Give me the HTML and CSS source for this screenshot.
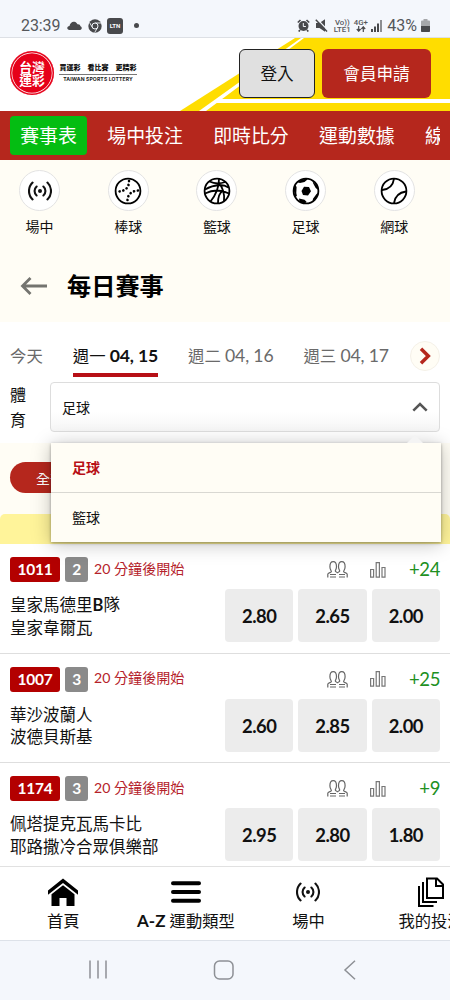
FILE: index.html
```
<!DOCTYPE html>
<html lang="zh-Hant">
<head>
<meta charset="utf-8">
<title>每日賽事</title>
<link rel="stylesheet" href="styles.css">
</head>
<body>
<svg class="defs" width="0" height="0">
  <symbol id="live" viewBox="0 0 24 20"><circle cx="12" cy="10" r="2" fill="currentColor"/><g fill="none" stroke="currentColor" stroke-width="2.100" stroke-linecap="round"><path d="M8.600 5.500a6 6 0 0 0 0 9M15.400 5.500a6 6 0 0 1 0 9M4.600 1.600a11.600 11.600 0 0 0 0 16.800M19.400 1.600a11.600 11.600 0 0 1 0 16.800"/></g></symbol>
  <symbol id="people" viewBox="0 0 21 17"><g fill="none" stroke="#666" stroke-width="1.200"><path d="M.8 16.500v-3.200c0-1.500 3.400-1.700 3.600-2.600.2-.9-1.500-2-1.500-5C2.900 2.500 4 .7 6.200.7s3.300 1.800 3.300 5c0 2.400-1.200 3.700-1.200 4.400 0 .9 2 1 2.200 2 .2-1 2.200-1.100 2.200-2 0-.7-1.200-2-1.200-4.400 0-3.200 1.100-5 3.300-5s3.300 1.800 3.300 5c0 3-1.700 4.100-1.500 5 .2.900 3.600 1.100 3.600 2.600v3.200"/><path d="M3 13.500h6M3 16h6M12 13.500h6M12 16h6"/></g></symbol>
  <symbol id="bars" viewBox="0 0 16 16"><g fill="none" stroke="#777" stroke-width="1.200"><path d="M.6 7.500h3v7.700h-3zM6.200.6h3.200v14.600H6.200zM12 5.500h3v9.700h-3z"/></g></symbol>
</svg>
<div class="statusbar">
  <div class="status-left">
    <span class="clock">23:39</span>
    <svg class="cloud" width="15" height="9" viewBox="0 0 15 9"><path d="M2.500 9C-.5 9-.4 5 2.500 5 3 2 5.200.3 7.300.7c1.600.2 2.700 1.300 3.200 2.500 2-.2 2.700.8 2.900 2C15.500 6 15 9 13 9z" fill="#48494c"/></svg>
    <svg class="chrome" width="14" height="14" viewBox="0 0 14 14"><circle cx="7" cy="7" r="6.700" fill="#48494c"/><path d="M7 4h6M4.400 8.500 1.500 3.500M9.600 8.500 6.700 13.500" stroke="#f4f7fc" stroke-width=".9"/><circle cx="7" cy="7" r="3" fill="#48494c" stroke="#f4f7fc"/></svg>
    <span class="ltn">LTN</span>
    <span class="dot"></span>
  </div>
  <div class="status-right">
    <svg width="13" height="13" viewBox="0 0 13 13"><circle cx="6.500" cy="7" r="5" fill="#48494c"/><path d="M.8 3.500 3.500 1M12.200 3.500 9.500 1M3 11l-1.300 1.500M10 11l1.300 1.500" stroke="#48494c" stroke-width="1.700"/><path d="M6.300 4v3.500h2.600" stroke="#f4f7fc" fill="none"/></svg>
    <svg width="13" height="13" viewBox="0 0 13 13"><path d="M1 4h3.500L10 .3v12.400L4.500 9H1z" fill="#48494c"/><path d="M2 0l11 11.500" stroke="#f4f7fc" stroke-width="1.300"/><path d="M.8.8l11.200 11.700" stroke="#48494c" stroke-width="1.500"/></svg>
    <span class="net">Vo))<br>LTE1</span>
    <span class="net">4G+<br><svg width="10" height="6" viewBox="0 0 10 6"><path d="M2.700 0v5M.8 3l1.900 2.200L4.600 3M7.300 6V1M5.400 3l1.900-2.200L9.200 3" fill="none" stroke="#48494c" stroke-width="1.200"/></svg></span>
    <svg width="11" height="12" viewBox="0 0 11 12"><path d="M0 9h2v3H0zM3 6.500h2V12H3zM6 3.500h2V12H6z" fill="#48494c"/><path d="M9 0h2v12H9z" fill="#8c8e92"/></svg>
    <span class="pct">43%</span>
    <svg class="batt" width="9" height="13" viewBox="0 0 9 13"><path d="M2.500 0h4v1.500H8Q9 1.500 9 2.500V12q0 1-1 1H1q-1 0-1-1V2.500q0-1 1-1h1.500z" fill="#a5a7aa"/><path d="M0 7h9v5q0 1-1 1H1q-1 0-1-1z" fill="#48494c"/></svg>
  </div>
</div>
<header class="header">
  <svg class="ribbon" width="270" height="73" viewBox="0 0 270 73"><path d="M115 0H270V73H0z" fill="#ffdd00"/><path d="M121 0h3L26 73h-7z" fill="#fff"/><path d="M38 61H270v4H33z" fill="#fff"/></svg>
  <div class="logo">
    <div class="seal"><span>台灣</span><span>運彩</span></div>
    <div class="slogan"><b>買運彩　看比賽　更精彩</b><small>TAIWAN SPORTS LOTTERY</small></div>
  </div>
  <div class="actions"><button class="btn login">登入</button><button class="btn join">會員申請</button></div>
</header>
<nav class="mainnav"><div class="track"><a class="active">賽事表</a><a>場中投注</a><a>即時比分</a><a>運動數據</a><a>線</a></div></nav>
<section class="sports">
  <div class="sport"><i><svg width="24" height="20"><use href="#live"/></svg></i><span>場中</span></div>
  <div class="sport"><i><svg width="28" height="28" viewBox="0 0 28 28"><circle cx="14" cy="14" r="12.400" class="ln"/><path d="M15 4q0 9.500-10 10.500M24 13.500Q13.500 14.500 13.500 24" fill="none" stroke="#000" stroke-width="2.600" stroke-linecap="round" stroke-dasharray=".1 3.800"/></svg></i><span>棒球</span></div>
  <div class="sport"><i><svg width="28" height="28" viewBox="0 0 28 28"><circle cx="14" cy="14" r="12.400" class="ln"/><path class="ln" d="M6.500 4.500Q14 8 22.500 5M16 2Q16 14 7.500 24.500M16 6.500Q22 13 21 24M2 12.500Q9 8.500 16.500 8 22 8 25.500 10.500M2 16.500Q14 10.500 26 16.500M15 26Q15 17 19.500 14"/></svg></i><span>籃球</span></div>
  <div class="sport"><i><svg width="28" height="28" viewBox="0 0 28 28"><circle cx="14" cy="14" r="12.400" class="ln"/><path d="M9.500 14 12 9.700l5 .3 2 4.200-3 4.200-5-.4zM8.500 3.300 14 1.500l1.500 1-3 2.500-4.500 1-2.500-.7zM20.500 4l5 5 .7 4-2.500-2-2.500-4.500zM1.600 12l1.800-4 1.200 2-.3 6 .6 3-1.700 1zM7 21.500l5.500 1.200 2 2L13 26.400 7.500 25zM24.500 17l1.500-1-1.500 5-4 3.700.5-3z"/></svg></i><span>足球</span></div>
  <div class="sport"><i><svg width="28" height="28" viewBox="0 0 28 28"><circle cx="14" cy="14" r="12.400" class="ln"/><path class="ln" d="M2 13Q12.500 12 14 1.800M26 14.500Q15.500 16 14 26"/></svg></i><span>網球</span></div>
</section>
<section class="title"><svg width="28" height="20" viewBox="0 0 28 20"><path d="M27 10H3M10.500 2 2.500 10l8 8" fill="none" stroke="#74746f" stroke-width="2.800"/></svg><h1>每日賽事</h1></section>
<section class="days"><a>今天</a><a class="active">週一 <b>04, 15</b></a><a>週二 <em>04, 16</em></a><a>週三 <em>04, 17</em></a><span class="next"><svg width="12" height="18" viewBox="0 0 12 18"><path d="M2 1.800 9.300 9 2 16.200" fill="none" stroke="#b5271d" stroke-width="3.500"/></svg></span></section>
<section class="filter">
  <label>體<br>育</label>
  <div class="select"><span>足球</span><svg width="16" height="10" viewBox="0 0 16 10"><path d="M1.300 8.700 8 2l6.700 6.700" fill="none" stroke="#555" stroke-width="2.500"/></svg>
    <div class="menu"><div class="on">足球</div><div>籃球</div></div>
  </div>
</section>
<section class="chips"><span class="chip">全部</span></section>
<div class="league"></div>
<main class="matches">
  <article class="match">
    <div class="meta"><b class="code">1011</b><b class="min">2</b><span class="when">20 分鐘後開始</span><svg class="people" width="21" height="17"><use href="#people"/></svg><svg class="bars" width="16" height="16"><use href="#bars"/></svg><span class="more">+24</span></div>
    <div class="body"><div class="teams">皇家馬德里<b>B</b>隊<br>皇家韋爾瓦</div><b class="odd">2.80</b><b class="odd">2.65</b><b class="odd">2.00</b></div>
  </article>
  <article class="match">
    <div class="meta"><b class="code">1007</b><b class="min">3</b><span class="when">20 分鐘後開始</span><svg class="people" width="21" height="17"><use href="#people"/></svg><svg class="bars" width="16" height="16"><use href="#bars"/></svg><span class="more">+25</span></div>
    <div class="body"><div class="teams">華沙波蘭人<br>波德貝斯基</div><b class="odd">2.60</b><b class="odd">2.85</b><b class="odd">2.00</b></div>
  </article>
  <article class="match">
    <div class="meta"><b class="code">1174</b><b class="min">3</b><span class="when">20 分鐘後開始</span><svg class="people" width="21" height="17"><use href="#people"/></svg><svg class="bars" width="16" height="16"><use href="#bars"/></svg><span class="more">+9</span></div>
    <div class="body"><div class="teams">佩塔提克瓦馬卡比<br>耶路撒冷合眾俱樂部</div><b class="odd">2.95</b><b class="odd">2.80</b><b class="odd">1.80</b></div>
  </article>
</main>
<footer class="tabbar">
  <a><i><svg width="32" height="28" viewBox="0 0 32 28"><path d="M1 12.500 16 .5l15 12v4.300L16 5 1 16.800z"/><path d="M4.500 16.300 16 7.300l11.500 9V28H19.500v-8h-7v8h-8z"/></svg></i>首頁</a>
  <a><i><svg width="30" height="22" viewBox="0 0 30 22"><path d="M2 2.200h26M2 11h26M2 19.800h26" stroke="#000" stroke-width="4" stroke-linecap="round"/></svg></i><span><b>A-Z</b> 運動類型</span></a>
  <a><i><svg width="24" height="20"><use href="#live"/></svg></i>場中</a>
  <a><i><svg width="28" height="30" viewBox="0 0 28 30"><g fill="none" stroke="#000" stroke-width="2"><path d="M10 1.500h10l6 6V21H10zM19 1.500V9h7M6 5v20h14M2 9v20h14.500"/></g></svg></i>我的投注</a>
</footer>
<div class="sysnav">
  <svg width="20" height="19" viewBox="0 0 20 19"><path d="M2 .5v18M10 .5v18M18 .5v18" stroke="#8d9095" stroke-width="1.500"/></svg>
  <svg width="22" height="20" viewBox="0 0 22 20"><rect x="1.500" y="1" width="18.500" height="18" rx="5" fill="none" stroke="#8d9095" stroke-width="1.500"/></svg>
  <svg width="14" height="20" viewBox="0 0 14 20"><path d="M12 .8 2 10l10 9.200" fill="none" stroke="#8d9095" stroke-width="1.500"/></svg>
</div>
</body>
</html>
```
FILE: styles.css
```
* { box-sizing: border-box; }
html { overflow: hidden; }
body { margin: 0; width: 450px; height: 1000px; overflow: hidden; background: #fff; color: #111; font-family: Lato, "Noto Sans CJK TC", sans-serif; font-size: 16px; display: flex; flex-direction: column; }
body > * { flex: none; }
svg { display: block; flex: none; }
i, em { font-style: normal; }
a, span, b { white-space: nowrap; }
.defs { display: none; }
.ln { fill: none; stroke: #000; stroke-width: 1.8; }

.statusbar { height: 38px; background: #f4f7fc; border-bottom: 1px solid #dde0e5; display: flex; justify-content: space-between; align-items: flex-start; padding: 15px 20px 0 21px; color: #55575b; font-family: Roboto, sans-serif; }
.status-left, .status-right { display: flex; align-items: center; height: 21px; }
.clock { font-size: 16px; width: 46px; letter-spacing: -.1px; }
.chrome { margin-left: 6px; }
.ltn { margin-left: 5px; width: 16px; height: 16px; border-radius: 3px; background: #48494c; color: #fff; font: bold 6px/16px Roboto, sans-serif; text-align: center; }
.dot { margin-left: 11px; width: 5px; height: 5px; border-radius: 50%; background: #48494c; }
.status-right svg { margin-right: 5.500px; }
.net { font: 500 7.800px/7px Roboto, sans-serif; text-align: center; margin-right: 3px; }
.net svg { display: inline-block; margin: 0; }
.pct { font-size: 16px; margin-right: 4px; }
.status-right .batt { margin-right: 0; }

.header { height: 73px; position: relative; display: flex; justify-content: space-between; padding: 11px 19px 0 10px; }
.ribbon { position: absolute; right: 0; top: 0; }
.logo, .actions { position: relative; display: flex; }
.logo { padding-top: 2px; gap: 5px; }
.seal { width: 44px; height: 44px; border-radius: 50%; background: #e60019; box-shadow: inset 0 0 0 1.500px #e60019, inset 0 0 0 2.200px #fff; color: #fff; font: 700 12.800px/13px "Noto Sans CJK TC", sans-serif; text-align: center; display: flex; flex-direction: column; justify-content: center; }
.slogan { width: 78px; padding-top: 10px; display: flex; flex-direction: column; }
.slogan b { font-size: 7px; line-height: 13px; border-bottom: 1px solid #777; font-weight: 900; text-align: center; height: 14px; }
.slogan small { font: bold 5.100px/9px Inter, sans-serif; text-align: center; white-space: nowrap; letter-spacing: .12px; color: #222; }
.actions { gap: 7px; }
.btn { height: 49px; border-radius: 6px; padding: 0 0 1px; font: 16.600px Lato, "Noto Sans CJK TC", sans-serif; }
.login { width: 76px; background: #e0e0e0; border: 1px solid #222; color: #111; }
.join { width: 109px; background: #b5271d; border: 0; color: #fff; }

.mainnav { height: 49px; background: #b5271d; padding: 5px 10px 0; }
.track { display: flex; gap: 10px; overflow: hidden; height: 39px; }
.track a { flex: none; color: #fff; font-size: 18.900px; line-height: 39px; padding: 0 10.200px; border-radius: 4px; }
.track .active { background: #04bd12; }

.sports { height: 90px; background: #fffdf5; display: flex; padding: 10px 0 0 19px; gap: 47.700px; }
.sport { width: 41px; display: flex; flex-direction: column; align-items: center; font-size: 14px; }
.sport i { width: 41px; height: 41px; flex: none; border: 1px solid #e3e3e3; border-radius: 50%; background: #fff; display: flex; align-items: center; justify-content: center; }
.sport span { line-height: 20px; margin-top: 6px; }
.title { height: 72px; background: #fffdf5; display: flex; align-items: center; padding-left: 20px; gap: 19px; }
.title h1 { margin: 0; font-size: 24.200px; line-height: 36px; color: #000; }

.days { height: 60px; display: flex; padding: 19px 10px 0; color: #6a6a6a; font-size: 16.400px; }
.days a { line-height: 30px; height: 36px; margin-right: 30px; }
.days b, .days em { font-size: 17.600px; letter-spacing: -.15px; }
.days .active { color: #111; border-bottom: 4px solid #b70f16; }
.next { margin-left: auto; width: 30px; height: 30px; flex: none; border-radius: 50%; border: 1px solid #f5f1e8; background: #fffdf5; display: flex; align-items: center; justify-content: center; }
.days a:nth-child(4) { margin-right: 0; }
.filter { height: 61px; display: flex; padding: 0 10px; justify-content: space-between; }
.filter label { line-height: 25px; font-size: 16px; }
.select { position: relative; width: 390px; height: 50px; border: 1px solid #ddd; border-radius: 4px; display: flex; align-items: center; justify-content: space-between; padding: 0 11px; font-size: 14px; background: linear-gradient(#fff 60%, #f5f5f5); }
.menu { position: absolute; z-index: 2; left: 0; top: 60px; width: 390px; height: 99px; background: #fffdf5; box-shadow: 0 1px 3px rgba(0,0,0,.35), 0 2px 18px rgba(0,0,0,.25); }
.menu::before { content: ""; position: absolute; right: 18px; top: -8px; border: 8px solid transparent; border-top: 0; border-bottom-color: #f4f4f4; }
.menu div { height: 50px; line-height: 50px; padding-left: 21px; }
.menu .on { color: #b70f16; font-weight: 700; border-bottom: 1px solid #d9d8d2; }
.chips { height: 71px; background: #fffdf5; padding: 19px 10px; }
.chip { display: block; width: 80px; height: 31px; line-height: 33px; border-radius: 16px; background: #b5271d; color: #fff; font-size: 14px; padding-left: 26px; }
.league { height: 30px; background: #fff49a; border-radius: 5px 5px 0 0; box-shadow: 0 -5px #fffdf5; }

.matches { height: 322px; overflow: hidden; }
.match { height: 109.700px; padding: 13px 10px 0; border-bottom: 1px solid #dedede; }
.meta { height: 25px; display: flex; align-items: center; }
.code, .min { height: 25px; line-height: 25px; border-radius: 3px; color: #fff; text-align: center; font-size: 15.500px; letter-spacing: -.3px; }
.code { width: 50px; background: #b30000; margin-right: 5px; }
.min { width: 23px; background: #8a8a8a; margin-right: 6px; }
.when { color: #b5222a; font-size: 14.100px; line-height: 22px; padding-bottom: 2px; }
.people { margin-left: auto; }
.bars { margin-left: 22px; }
.more { width: 54px; text-align: right; color: #21901f; font-size: 18.500px; letter-spacing: -.4px; padding-bottom: 1px; }
.body { display: flex; gap: 5px; padding-top: 7px; }
.teams { width: 210px; padding-top: 5px; font-size: 16.500px; line-height: 22.500px; white-space: nowrap; }
.odd { flex: 1; height: 53px; border-radius: 4px; background: #ececec; text-align: center; line-height: 54px; font-size: 18.400px; letter-spacing: -.5px; }

.tabbar { height: 74px; background: #fff; border-top: 1px solid #e1e1e1; display: flex; padding-left: 2px; overflow: hidden; }
.tabbar a { flex: none; width: 122.600px; display: flex; flex-direction: column; align-items: center; font-size: 16.300px; line-height: 24px; }
.tabbar a b { font-size: 17px; }
.tabbar i { height: 34px; margin-top: 8px; display: flex; align-items: center; }
.sysnav { height: 60px; background: #f4f7fc; border-top: 1px solid #dde2e9; display: grid; grid-template-columns: repeat(3, 126px); justify-content: center; justify-items: center; align-items: center; padding: 0 2px 2px 0; }
```
